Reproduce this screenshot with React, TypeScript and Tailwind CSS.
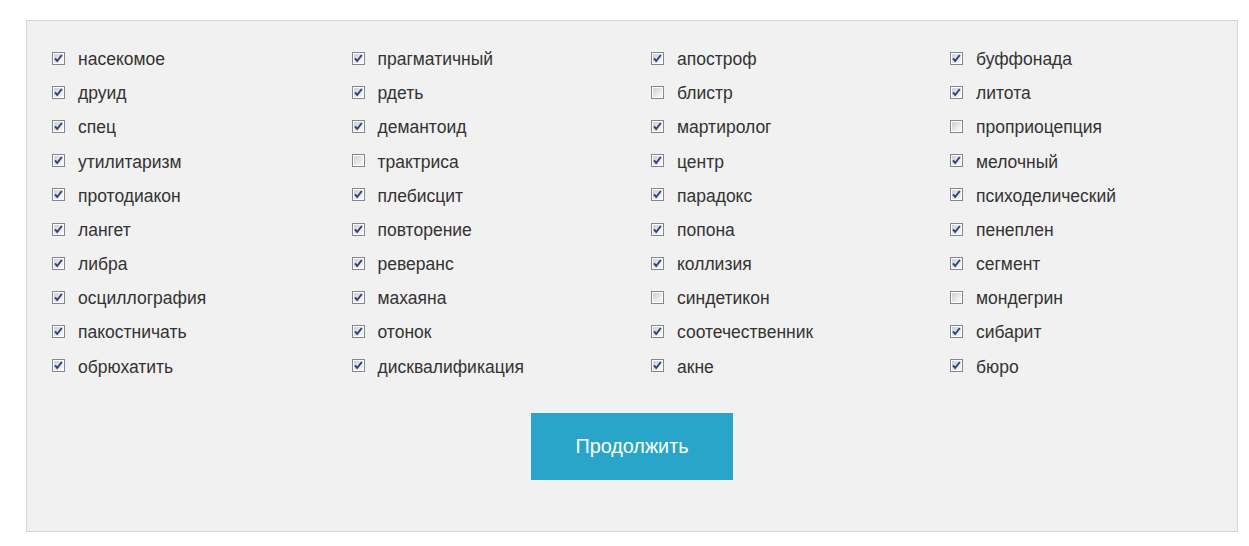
import React from "react";

const columns: [string, boolean][][] = [
  [
    ["насекомое", true],
    ["друид", true],
    ["спец", true],
    ["утилитаризм", true],
    ["протодиакон", true],
    ["лангет", true],
    ["либра", true],
    ["осциллография", true],
    ["пакостничать", true],
    ["обрюхатить", true],
  ],
  [
    ["прагматичный", true],
    ["рдеть", true],
    ["демантоид", true],
    ["трактриса", false],
    ["плебисцит", true],
    ["повторение", true],
    ["реверанс", true],
    ["махаяна", true],
    ["отонок", true],
    ["дисквалификация", true],
  ],
  [
    ["апостроф", true],
    ["блистр", false],
    ["мартиролог", true],
    ["центр", true],
    ["парадокс", true],
    ["попона", true],
    ["коллизия", true],
    ["синдетикон", false],
    ["соотечественник", true],
    ["акне", true],
  ],
  [
    ["буффонада", true],
    ["литота", true],
    ["проприоцепция", false],
    ["мелочный", true],
    ["психоделический", true],
    ["пенеплен", true],
    ["сегмент", true],
    ["мондегрин", false],
    ["сибарит", true],
    ["бюро", true],
  ],
];

const Box = ({ checked }: { checked: boolean }) => (
  <svg width="13" height="13" viewBox="0 0 13 13" className="shrink-0 -translate-y-px">
    <defs>
      <linearGradient id="cbg" x1="0" y1="0" x2="1" y2="1">
        <stop offset="0" stopColor="#d0d0d0" />
        <stop offset="1" stopColor="#fafafa" />
      </linearGradient>
    </defs>
    <rect x="0.5" y="0.5" width="12" height="12" fill="#fff" stroke="#868787" />
    <rect x="2" y="2" width="9" height="9" fill="url(#cbg)" />
    {checked && (
      <path
        d="M3 6.3 L5.2 9 L9.8 3"
        fill="none"
        stroke="#2f4384"
        strokeWidth="2"
      />
    )}
  </svg>
);

export default function App() {
  return (
    <div className="w-[1249px] h-[546px] bg-white pt-5 pl-[26px] font-['Liberation_Sans',Arial,sans-serif]">
      <div className="w-[1212px] border border-[#d6d6d6] bg-[#f1f1f1] pl-[25px] pt-[21px] pb-[51px]">
        <div className="grid grid-cols-[299.5px_299.5px_299px_1fr]">
          {columns.map((col, i) => (
            <div key={i} className="flex flex-col">
              {col.map(([label, checked]) => (
                <label
                  key={label}
                  className="flex h-[34.2px] items-center gap-[13px] text-[17.5px] text-[#333]"
                >
                  <Box checked={checked} />
                  <span>{label}</span>
                </label>
              ))}
            </div>
          ))}
        </div>
        <div className="mt-[29px] flex justify-center pr-[25px]">
          <button className="h-[67px] w-[202px] bg-[#2aa5ca] text-[19.8px] text-white">
            Продолжить
          </button>
        </div>
      </div>
    </div>
  );
}
